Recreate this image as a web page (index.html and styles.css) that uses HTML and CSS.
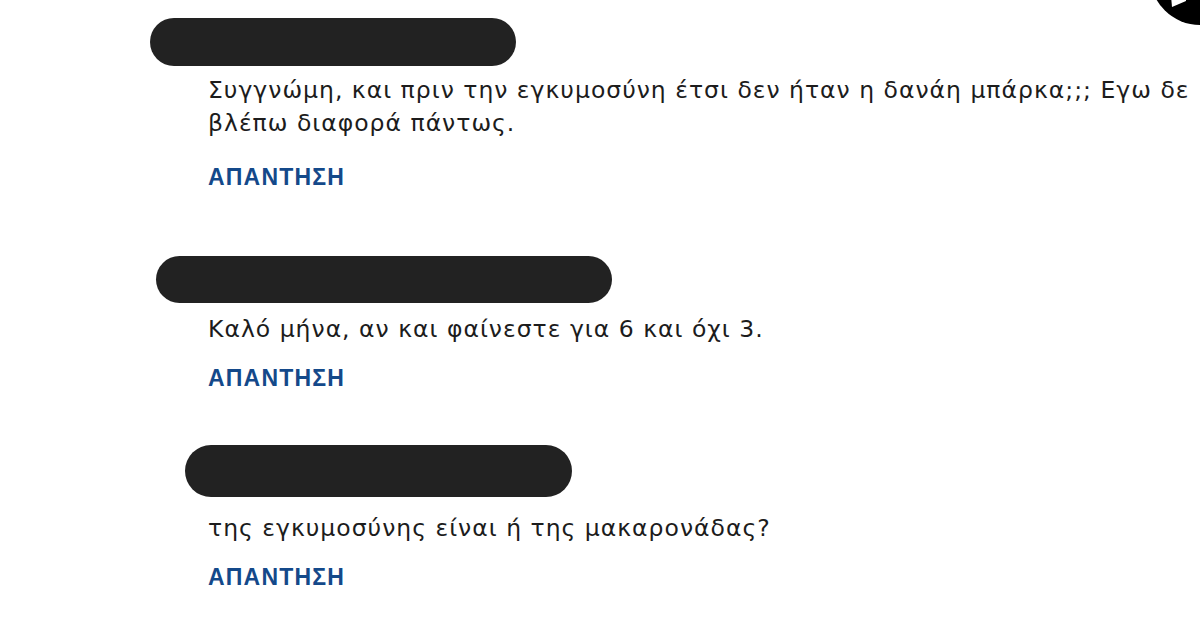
FILE: index.html
```html
<!DOCTYPE html>
<html lang="el">
<head>
<meta charset="utf-8">
<link rel="stylesheet" href="styles.css">
</head>
<body>
<div class="corner-btn"><svg viewBox="0 0 100 100" width="100" height="100"><circle cx="50" cy="50" r="50" fill="#000"/><path d="M20 60 L36 60 L36 76 L22 82 Z" fill="#fff"/></svg></div>
<main class="comments">
  <article class="comment c1">
    <div class="name blob1"></div>
    <div class="body">
      <p class="text">Συγγνώμη, και πριν την εγκυμοσύνη έτσι δεν ήταν η δανάη μπάρκα;;; Εγω δε βλέπω διαφορά πάντως.</p>
      <a class="reply">ΑΠΑΝΤΗΣΗ</a>
    </div>
  </article>
  <article class="comment c2">
    <div class="name blob2"></div>
    <div class="body">
      <p class="text">Καλό μήνα, αν και φαίνεστε για 6 και όχι 3.</p>
      <a class="reply">ΑΠΑΝΤΗΣΗ</a>
    </div>
  </article>
  <article class="comment c3">
    <div class="name blob3"></div>
    <div class="body">
      <p class="text">της εγκυμοσύνης είναι ή της μακαρονάδας?</p>
      <a class="reply">ΑΠΑΝΤΗΣΗ</a>
    </div>
  </article>
</main>
</body>
</html>
```
FILE: styles.css
```css
html, body {
  margin: 0;
  padding: 0;
  background: #fff;
  overflow: hidden;
  width: 1200px;
  height: 624px;
}
body {
  font-family: "DejaVu Sans", "Liberation Sans", sans-serif;
  color: #1a1a1a;
  position: relative;
}
.corner-btn {
  position: absolute;
  left: 1150px;
  top: -75px;
  width: 100px;
  height: 100px;
}
.corner-btn svg { display: block; }
.comments {
  display: flex;
  flex-direction: column;
  padding-top: 18px;
}
.comment {
  display: flex;
  flex-direction: column;
}
.name {
  height: 48px;
  background: #222;
  border-radius: 24px;
}
.blob1 { margin-left: 150px; width: 366px; }
.blob2 { margin-left: 156px; width: 456px; height: 47px; }
.blob3 { margin-left: 185px; width: 387px; height: 52px; border-radius: 26px; }
.body {
  padding-left: 208px;
}
.text {
  margin: 0;
  font-size: 23.5px;
  line-height: 33px;
  letter-spacing: 1px;
  color: #1c1c1c;
}
.c1 .text { margin-top: 8px; width: 990px; }
.c2 .text { margin-top: 10px; }
.c3 .text { margin-top: 15px; }
.reply {
  display: inline-block;
  margin-top: 25px;
  font-family: "Liberation Sans", Arial, sans-serif;
  font-weight: bold;
  font-size: 23px;
  line-height: 24px;
  color: #14498a;
  letter-spacing: 1.2px;
}
.c2 .reply, .c3 .reply { margin-top: 20px; }
.c2 { margin-top: 67px; }
.c3 { margin-top: 55px; }
```
